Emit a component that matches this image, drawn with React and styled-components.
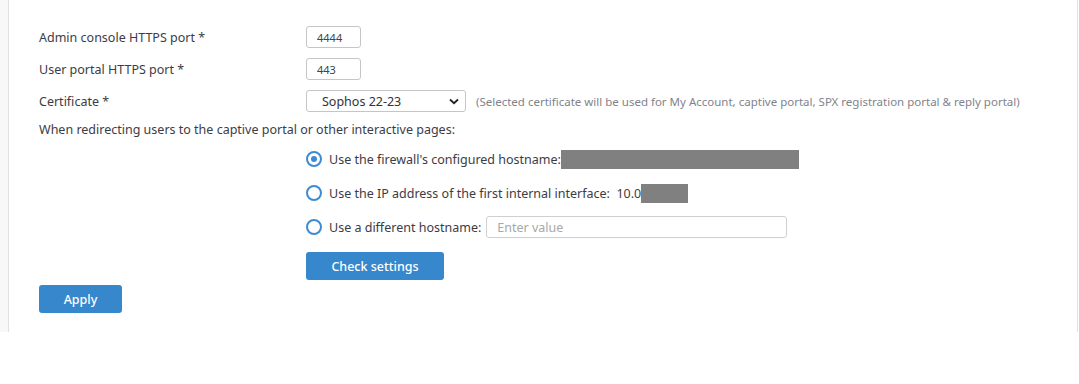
import React from 'react';
import styled, { createGlobalStyle } from 'styled-components';

const Global = createGlobalStyle`
  body {
    margin: 0;
    background: #fff;
    font-family: 'Noto Sans', 'Liberation Sans', sans-serif;
  }
`;

const Page = styled.div`
  display: flex;
  width: 1079px;
  height: 332px;
`;

const Gutter = styled.div`
  width: 8px;
  background: #f8f8f8;
  border-right: 1px solid #e1e1e1;
`;

const Panel = styled.div`
  flex: 1;
  border-right: 1px solid #e1e1e1;
  padding: 26px 0 0 30px;
  font-size: 12.5px;
  color: #3c3c46;
`;

const Edge = styled.div`
  width: 1px;
`;

const Row = styled.div`
  display: flex;
  align-items: center;
  height: 22px;
  margin-bottom: 10px;
`;

const Label = styled.div`
  width: 267px;
  flex-shrink: 0;
`;

const PortInput = styled.div`
  box-sizing: border-box;
  width: 55px;
  height: 22px;
  border: 1px solid #c5c5c5;
  border-radius: 3px;
  padding-left: 10px;
  display: flex;
  align-items: center;
  font-size: 11px;
  color: #444;
`;

const Select = styled.div`
  box-sizing: border-box;
  width: 160px;
  height: 22px;
  border: 1px solid #c5c5c5;
  border-radius: 3px;
  padding: 0 6px 0 15px;
  display: flex;
  align-items: center;
  justify-content: space-between;
  color: #333;
`;

const Note = styled.span`
  margin-left: 10px;
  color: #80838c;
  font-size: 11.5px;
`;

const Intro = styled.div`
  margin-top: -1px;
  height: 18px;
`;

const Options = styled.div`
  padding-left: 267px;
  margin-top: 9px;
  display: flex;
  flex-direction: column;
  gap: 12px;
`;

const Option = styled.div`
  display: flex;
  align-items: center;
  height: 22px;
`;

const Radio = styled.span`
  box-sizing: border-box;
  width: 16px;
  height: 16px;
  border-radius: 50%;
  border: 2px solid #3d8bd3;
  margin-right: 7px;
  display: flex;
  align-items: center;
  justify-content: center;
  &::after {
    content: '';
    width: 6px;
    height: 6px;
    border-radius: 50%;
    background: ${p => (p.checked ? '#3d8bd3' : 'transparent')};
  }
`;

const Masked = styled.span`
  display: inline-block;
  width: ${p => p.w}px;
  height: 19px;
  background: #808080;
`;

const TextInput = styled.div`
  box-sizing: border-box;
  width: 301px;
  height: 22px;
  margin-left: 5px;
  border: 1px solid #cfcfcf;
  border-radius: 3px;
  padding-left: 10px;
  display: flex;
  align-items: center;
  color: #a8a8a8;
`;

const Button = styled.button`
  height: 28px;
  padding: 0;
  width: ${p => p.w}px;
  border: none;
  border-radius: 3px;
  background: #3787cc;
  color: #fff;
  font-family: inherit;
  font-size: 12.5px;
  font-weight: 500;
`;

const CheckWrap = styled.div`
  padding-left: 267px;
  margin-top: 14px;
`;

const ApplyWrap = styled.div`
  margin-top: 5px;
`;

const Chevron = () => (
  <svg width="10" height="7" viewBox="0 0 10 7">
    <path d="M1 1.5 L5 5.2 L9 1.5" fill="none" stroke="#222" strokeWidth="1.8" />
  </svg>
);

export default function App() {
  return (
    <>
      <Global />
      <Page>
        <Gutter />
        <Panel>
          <Row>
            <Label>Admin console HTTPS port *</Label>
            <PortInput>4444</PortInput>
          </Row>
          <Row>
            <Label>User portal HTTPS port *</Label>
            <PortInput>443</PortInput>
          </Row>
          <Row>
            <Label>Certificate *</Label>
            <Select>
              <span>Sophos 22-23</span>
              <Chevron />
            </Select>
            <Note>
              (Selected certificate will be used for My Account, captive portal, SPX registration portal &amp; reply portal)
            </Note>
          </Row>
          <Intro>When redirecting users to the captive portal or other interactive pages:</Intro>
          <Options>
            <Option>
              <Radio checked />
              Use the firewall's configured hostname:
              <Masked w={238} />
            </Option>
            <Option>
              <Radio />
              Use the IP address of the first internal interface:&nbsp; 10.0
              <Masked w={47} />
            </Option>
            <Option>
              <Radio />
              Use a different hostname:
              <TextInput>Enter value</TextInput>
            </Option>
          </Options>
          <CheckWrap>
            <Button w={138}>Check settings</Button>
          </CheckWrap>
          <ApplyWrap>
            <Button w={83}>Apply</Button>
          </ApplyWrap>
        </Panel>
        <Edge />
      </Page>
    </>
  );
}
